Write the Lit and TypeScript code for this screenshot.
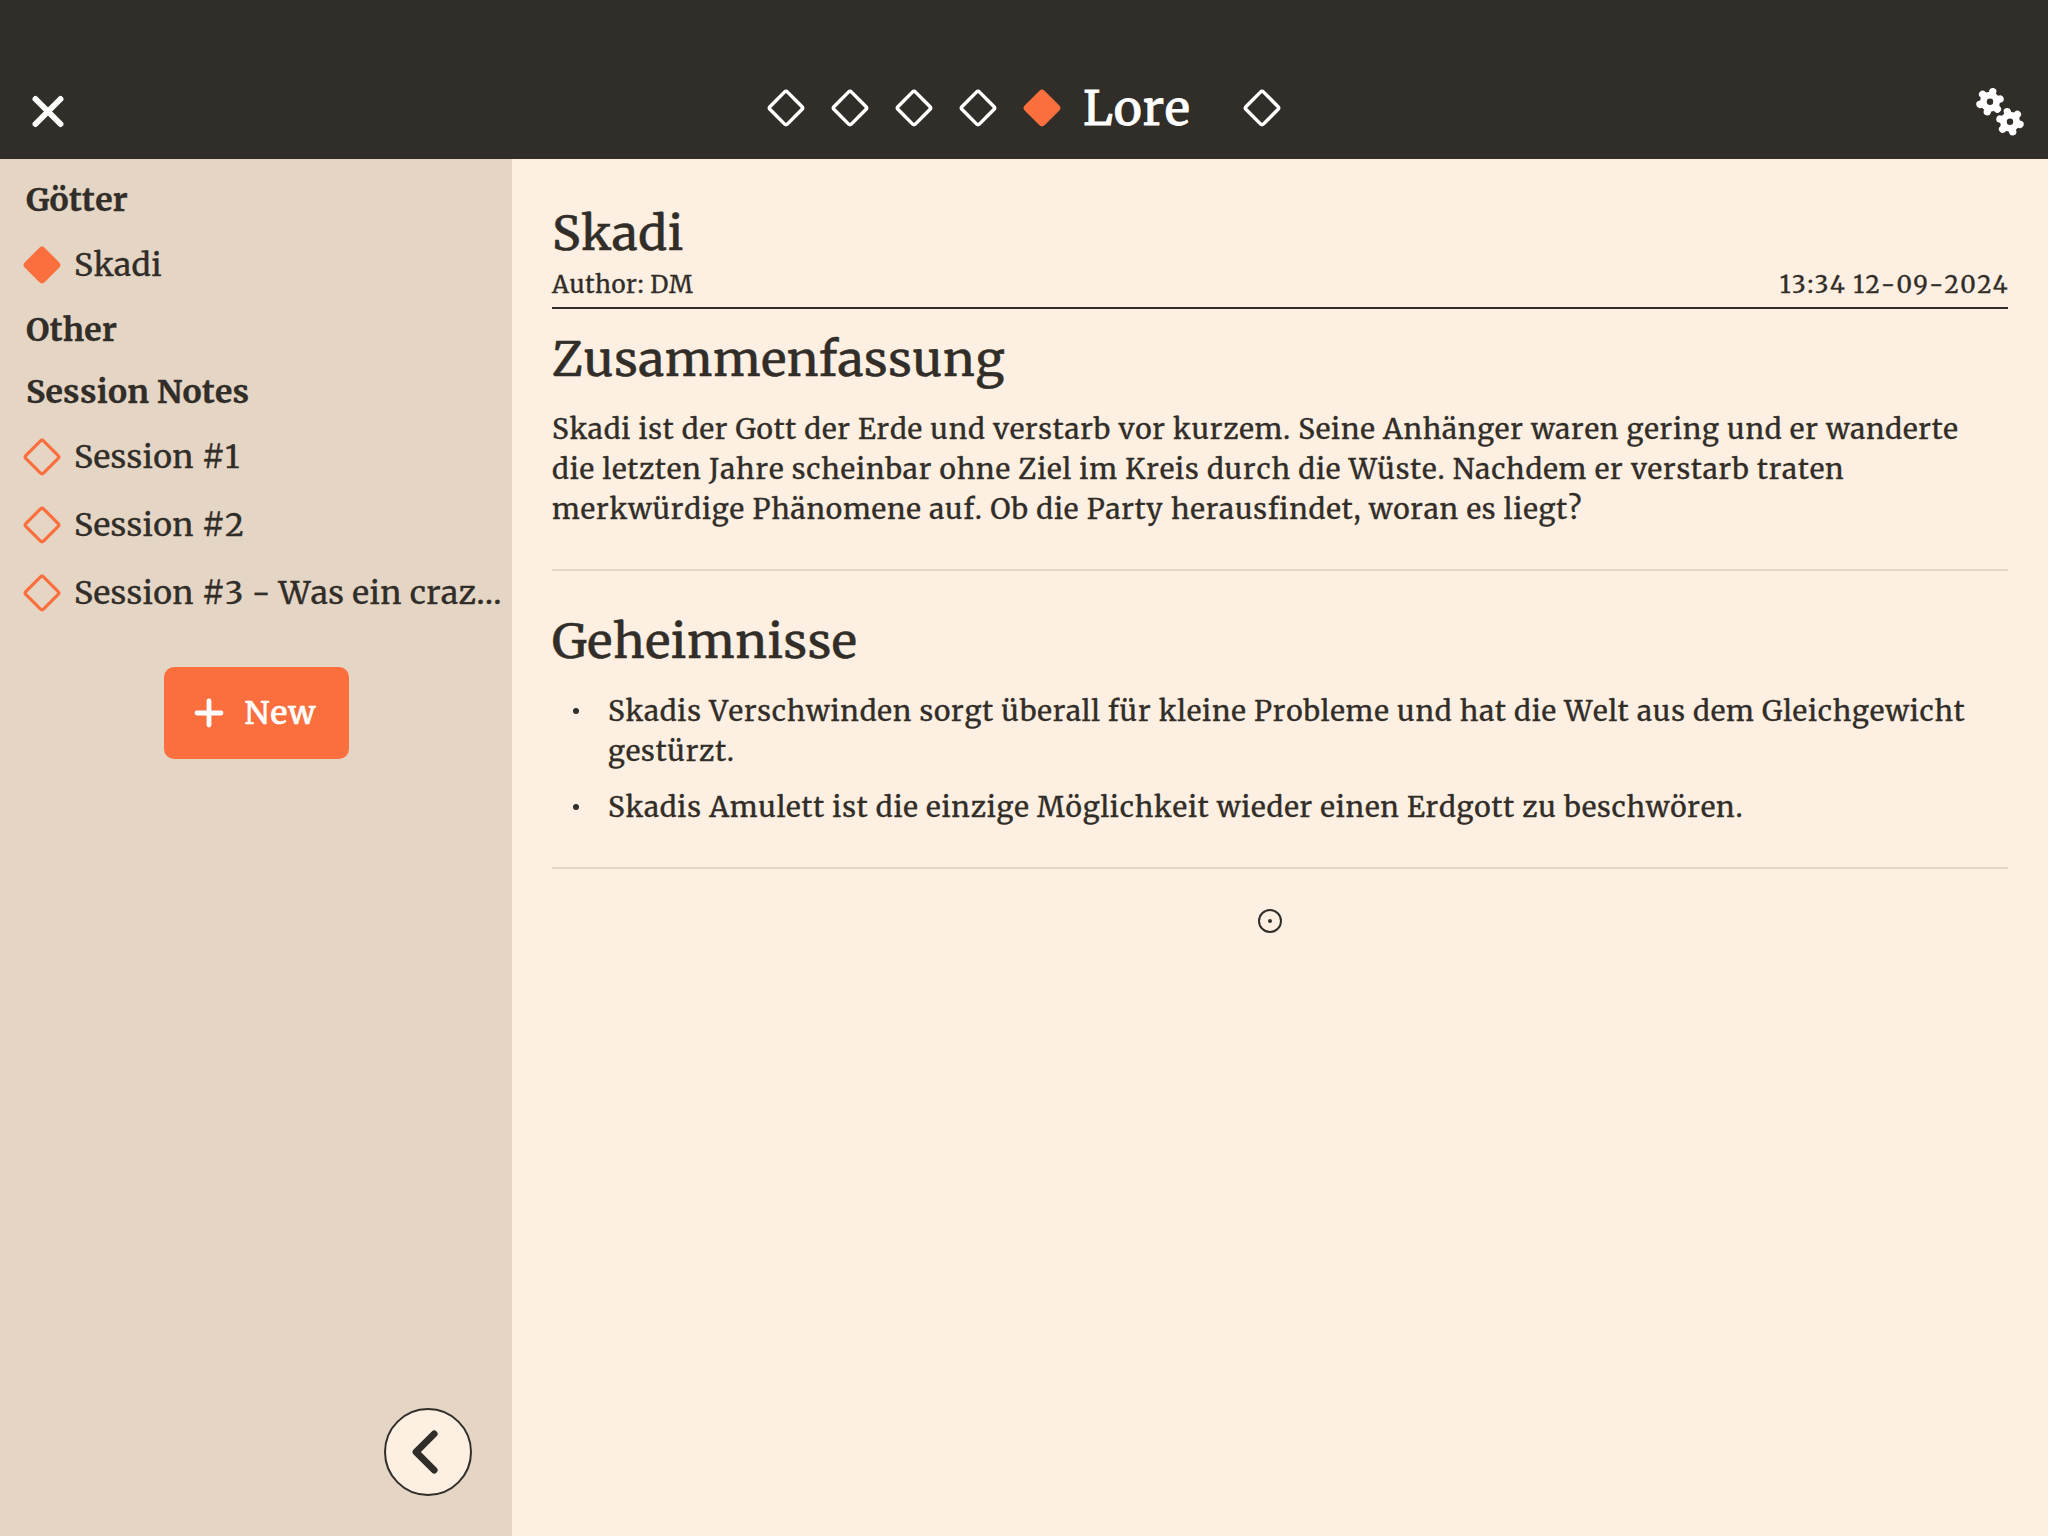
import { LitElement, html, svg, css } from "lit";
import { customElement, property } from "lit/decorators.js";
import { classMap } from "lit/directives/class-map.js";

@customElement("diamond-mark")
class DiamondMark extends LitElement {
  @property({ type: Boolean }) filled = false;
  @property({ type: Number }) weight = 2.6;

  static styles = css`
    :host { display: block; width: 36px; height: 36px; flex: none; }
    svg { display: block; overflow: visible; }
  `;

  render() {
    const w = this.weight;
    const side = 28.2 - w;
    return html`<svg width="36" height="36" viewBox="-18 -18 36 36">
      <rect x=${-side / 2} y=${-side / 2} width=${side} height=${side} rx=${4 - w / 2}
        transform="rotate(45)" stroke="currentColor" stroke-width=${w}
        fill=${this.filled ? "currentColor" : "none"}></rect>
    </svg>`;
  }
}

interface Group { title: string; entries: { name: string; active?: boolean }[]; }

const groups: Group[] = [
  { title: "Götter", entries: [{ name: "Skadi", active: true }] },
  { title: "Other", entries: [] },
  {
    title: "Session Notes",
    entries: [
      { name: "Session #1" },
      { name: "Session #2" },
      { name: "Session #3 - Was ein craz…" },
    ],
  },
];

const secrets = [
  "Skadis Verschwinden sorgt überall für kleine Probleme und hat die Welt aus dem Gleichgewicht gestürzt.",
  "Skadis Amulett ist die einzige Möglichkeit wieder einen Erdgott zu beschwören.",
];

const gear = (cx: number, cy: number, start: number) => svg`
  <g transform="translate(${cx} ${cy})">
    <circle r="10" fill="#fff"></circle>
    ${[0, 60, 120, 180, 240, 300].map(
      (a) => svg`<line x1="6" y1="0" x2="10.4" y2="0" transform="rotate(${a + start})"
        stroke="#fff" stroke-width="7.4" stroke-linecap="round"></line>`
    )}
    <circle r="3.2" fill="#312d28"></circle>
  </g>`;

@customElement("app-root")
class AppRoot extends LitElement {
  static styles = css`
    :host {
      display: flex;
      flex-direction: column;
      width: 100%;
      height: 100vh;
      background: #fdefe1;
      color: #312d28;
      font-family: Merriweather, "DejaVu Serif", serif;
      font-kerning: none;
      font-size: 28px;
      -webkit-text-stroke: 0.3px currentColor;
    }
    * { box-sizing: border-box; }
    svg { display: block; flex: none; }
    button { all: unset; box-sizing: border-box; display: flex; align-items: center; }
    header {
      height: 159px;
      flex: none;
      padding: 56px 22px 0 30px;
      background: #312d28;
      color: #fff;
      display: grid;
      grid-template-columns: 1fr auto 1fr;
      align-items: start;
    }
    .close { padding-top: 37px; }
    .gears { justify-self: end; padding-top: 29px; }
    nav { height: 104px; display: flex; align-items: center; gap: 28px; margin-left: -8px; }
    .tab { display: flex; align-items: center; }
    .tab.active { color: #fa6f3d; }
    .tab-name {
      color: #fff;
      font-size: 48px;
      line-height: 60px;
      letter-spacing: 0.8px;
      width: 133px;
      margin-left: 23px;
      padding-bottom: 1px;
      -webkit-text-stroke: 0.8px #fff;
    }
    .body { flex: 1; display: flex; min-height: 0; }
    aside {
      width: 512px;
      flex: none;
      background: #e5d5c4;
      padding-top: 10px;
      display: flex;
      flex-direction: column;
      font-size: 32px;
    }
    .group { margin: 0; padding-left: 26px; line-height: 62px; font-size: 32px; font-weight: 700; letter-spacing: 0.25px; }
    .entry { height: 68px; padding: 0 0 0 24px; display: flex; align-items: center; gap: 14px; color: #fa6f3d; }
    .entry-name {
      color: #312d28;
      letter-spacing: 0.37px;
      line-height: 68px;
      white-space: nowrap;
    }
    .new {
      align-self: center;
      width: 185px;
      height: 92px;
      margin-top: 40px;
      padding-left: 30px;
      gap: 21px;
      border-radius: 10px;
      background: #fa6f3d;
      color: #fff;
      letter-spacing: 1.2px;
      -webkit-text-stroke: 0.7px #fff;
    }
    .back {
      align-self: flex-end;
      justify-content: center;
      width: 88px;
      height: 88px;
      margin: auto 40px 40px 0;
      border: 2px solid #312d28;
      border-radius: 50%;
      background: #fdefe1;
    }
    main { flex: 1; padding: 44px 40px 0; }
    h1, h2 { margin: 0; font-weight: 400; font-size: 48px; line-height: 60px; letter-spacing: 0.55px; -webkit-text-stroke: 0.5px currentColor; }
    .meta {
      height: 46px;
      padding-top: 6px;
      border-bottom: 2px solid #312d28;
      display: flex;
      justify-content: space-between;
      font-size: 24px;
      line-height: 31px;
    }
    .author { letter-spacing: 0.55px; }
    .date { letter-spacing: 1.4px; margin-right: -1px; }
    section { padding: 40px 0 40px; border-bottom: 2px solid #e5d5c4; line-height: 40px; letter-spacing: 0.78px; }
    .first { padding-top: 20px; letter-spacing: 0.81px; }
    p { margin: 20px 0 0; }
    p::first-line { letter-spacing: 0.75px; }
    ul { margin: 20px 0 0; padding: 0; list-style: none; display: flex; flex-direction: column; gap: 16px; }
    li { display: flex; gap: 29px; padding-left: 21px; }
    li::before { content: ""; width: 6px; height: 6px; margin-top: 17px; border-radius: 50%; background: #312d28; flex: none; }
    .end { margin: 40px auto 0; transform: translateX(-10px); }
  `;

  render() {
    return html`
      <header>
        <button class="close" aria-label="Close">
          <svg width="36" height="36" viewBox="0 0 36 36" stroke="#fff" stroke-width="5.9" stroke-linecap="round">
            <path d="M5.5 6 30.5 31M30.5 6 5.5 31"></path>
          </svg>
        </button>
        <nav>
          ${[0, 1, 2, 3, 4, 5].map(
            (i) => html`<div class=${classMap({ tab: true, active: i === 4 })}>
              <diamond-mark .filled=${i === 4} .weight=${3.5}></diamond-mark>
              ${i === 4 ? html`<span class="tab-name">Lore</span>` : ""}
            </div>`
          )}
        </nav>
        <button class="gears" aria-label="Settings">
          <svg width="52" height="52" viewBox="1974 85 52 52">
            ${gear(1990, 101.7, 45)}${gear(2010, 121.7, 15)}
          </svg>
        </button>
      </header>
      <div class="body">
        <aside>
          ${groups.map(
            (g) => html`<h3 class="group">${g.title}</h3>
              ${g.entries.map(
                (e) => html`<div class="entry">
                  <diamond-mark .filled=${!!e.active} .weight=${3.2}></diamond-mark>
                  <span class="entry-name">${e.name}</span>
                </div>`
              )}`
          )}
          <button class="new">
            <svg width="30" height="30" viewBox="0 0 30 30" stroke="#fff" stroke-width="4.8" stroke-linecap="round">
              <path d="M15 3V27M3 15H27"></path>
            </svg>
            <span>New</span>
          </button>
          <button class="back" aria-label="Collapse">
            <svg width="84" height="84" viewBox="0 0 84 84" fill="none" stroke="#312d28" stroke-width="6.8"
              stroke-linecap="round" stroke-linejoin="round">
              <path d="M48.2 23.8 30 42 48.2 60.2"></path>
            </svg>
          </button>
        </aside>
        <main>
          <h1>Skadi</h1>
          <div class="meta"><span class="author">Author: DM</span><span class="date">13:34 12-09-2024</span></div>
          <section class="first">
            <h2>Zusammenfassung</h2>
            <p>Skadi ist der Gott der Erde und verstarb vor kurzem. Seine Anhänger waren gering und er wanderte die letzten Jahre scheinbar ohne Ziel im Kreis durch die Wüste. Nachdem er verstarb traten merkwürdige Phänomene auf. Ob die Party herausfindet, woran es liegt?</p>
          </section>
          <section>
            <h2>Geheimnisse</h2>
            <ul>${secrets.map((s) => html`<li><span>${s}</span></li>`)}</ul>
          </section>
          <svg class="end" width="24" height="24" viewBox="-12 -12 24 24">
            <circle r="11" fill="none" stroke="#312d28" stroke-width="2"></circle>
            <circle r="2" fill="#312d28"></circle>
          </svg>
        </main>
      </div>
    `;
  }
}
